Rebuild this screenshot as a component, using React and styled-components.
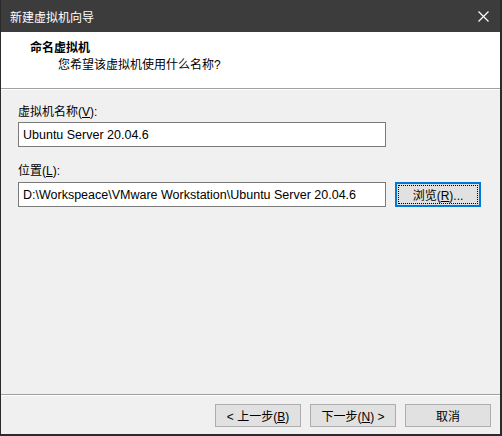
import React, { useState } from "react";
import styled, { createGlobalStyle } from "styled-components";

const GlobalStyle = createGlobalStyle`
  html, body {
    margin: 0;
    padding: 0;
    background: #2b2b2b;
  }
  * {
    box-sizing: border-box;
  }
`;

const font = `"Liberation Sans", "Noto Sans CJK SC", sans-serif`;

const Window = styled.div`
  width: 502px;
  height: 436px;
  display: flex;
  flex-direction: column;
  border-left: 1px solid #2b2b2b;
  border-right: 2px solid #2b2b2b;
  border-bottom: 2px solid #2b2b2b;
  font-family: ${font};
  font-size: 12px;
  color: #000;
`;

const TitleBar = styled.div`
  height: 32px;
  flex: none;
  display: flex;
  align-items: center;
  justify-content: space-between;
  padding: 0 10px 0 9px;
  background: #3c3c3c;
  color: #fff;
  font-size: 12px;
`;

const CloseButton = styled.div`
  width: 12px;
  height: 12px;
  display: flex;
  align-items: center;
  justify-content: center;
  margin-right: 1px;
`;

const Header = styled.div`
  height: 57px;
  flex: none;
  background: #fff;
  padding: 8px 0 0 29px;
  border-bottom: 1px solid #a0a0a0;
`;

const Heading = styled.div`
  font-weight: bold;
  font-size: 12px;
  line-height: 16px;
`;

const SubTitle = styled.div`
  margin: 1px 0 0 28px;
  line-height: 16px;
`;

const Body = styled.div`
  flex: 1;
  background: #f0f0f0;
  border-top: 1px solid #fff;
  padding: 14px 0 0 17px;
`;

const Label = styled.div`
  line-height: 16px;
  margin-bottom: ${(p) => p.gap || 2}px;
  margin-top: ${(p) => p.top || 0}px;

  u {
    text-decoration: underline;
  }
`;

const Row = styled.div`
  display: flex;
  align-items: center;
  gap: 9px;
`;

const TextBox = styled.input`
  width: 368px;
  height: 25px;
  border: 1px solid #7a7a7a;
  background: #fff;
  padding: 0 4px;
  font-family: ${font};
  font-size: 12.5px;
  color: #000;
  outline: none;
`;

const Button = styled.button`
  width: 86px;
  height: ${(p) => (p.tall ? 25 : 23)}px;
  background: #e1e1e1;
  border: ${(p) => (p.focused ? "2px solid #0078d7" : "1px solid #adadad")};
  font-family: ${font};
  font-size: 12px;
  color: #000;
  padding: 0;
  outline: ${(p) => (p.focused ? "1px dotted #000" : "none")};
  outline-offset: -4px;
  cursor: default;
`;

const Footer = styled.div`
  flex: none;
  background: #f0f0f0;
  border-top: 1px solid #a0a0a0;
  box-shadow: inset 0 1px 0 #fff;
  display: flex;
  justify-content: flex-end;
  gap: 9px;
  padding: 9px 9px 7px 0;
`;

const CloseIcon = () => (
  <svg width="11" height="11" viewBox="0 0 11 11">
    <path d="M0.5 0.5 L10.5 10.5 M10.5 0.5 L0.5 10.5" stroke="#fff" strokeWidth="1.2" />
  </svg>
);

const App = () => {
  const [name, setName] = useState("Ubuntu Server 20.04.6");
  const [path, setPath] = useState(
    "D:\\Workspeace\\VMware Workstation\\Ubuntu Server 20.04.6"
  );

  return (
    <>
      <GlobalStyle />
      <Window>
        <TitleBar>
          <span>新建虚拟机向导</span>
          <CloseButton>
            <CloseIcon />
          </CloseButton>
        </TitleBar>
        <Header>
          <Heading>命名虚拟机</Heading>
          <SubTitle>您希望该虚拟机使用什么名称?</SubTitle>
        </Header>
        <Body>
          <Label>
            虚拟机名称(<u>V</u>):
          </Label>
          <TextBox value={name} onChange={(e) => setName(e.target.value)} />
          <Label top={16} gap={3}>
            位置(<u>L</u>):
          </Label>
          <Row>
            <TextBox value={path} onChange={(e) => setPath(e.target.value)} />
            <Button tall focused>
              浏览(<u>R</u>)...
            </Button>
          </Row>
        </Body>
        <Footer>
          <Button>
            &lt; 上一步(<u>B</u>)
          </Button>
          <Button>
            下一步(<u>N</u>) &gt;
          </Button>
          <Button>取消</Button>
        </Footer>
      </Window>
    </>
  );
};

export default App;
